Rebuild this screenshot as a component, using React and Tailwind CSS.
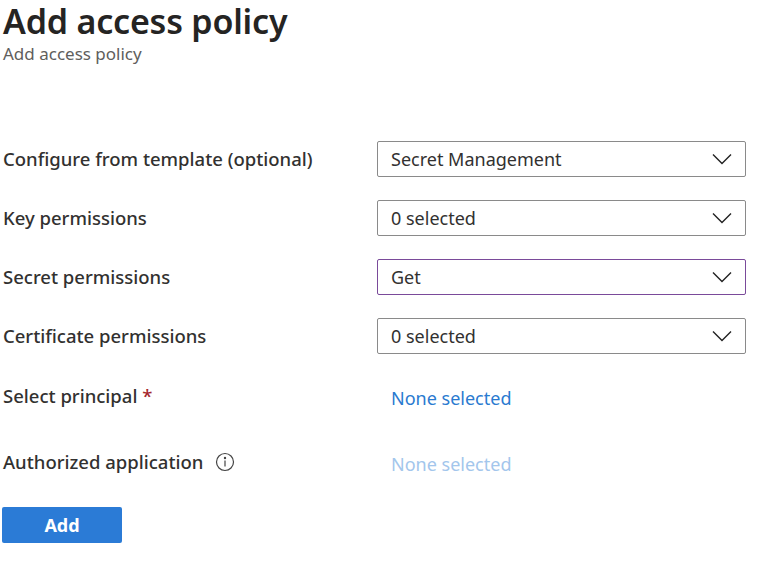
import React from "react";

const Chevron = () => (
  <svg width="20" height="12" viewBox="0 0 20 12" fill="none" stroke="#222" strokeWidth="1.4">
    <path d="M1 1.5 L10 10.5 L19 1.5" />
  </svg>
);

const Dropdown = ({ value, purple }) => (
  <div className={`flex items-center justify-between w-[369px] h-[36px] pl-[13px] pr-[13px] rounded-[2px] border ${purple ? "border-[#7a4a9a]" : "border-[#8a8a8a]"}`}>
    <span className="text-[18px] text-[#323130]">{value}</span>
    <Chevron />
  </div>
);

const Row = ({ label, children }) => (
  <div className="flex items-center h-[36px]">
    <div className="w-[377px] pl-[3px] text-[18.5px] font-medium text-[#323130]">{label}</div>
    {children}
  </div>
);

export default function App() {
  return (
    <div className="w-[768px] h-[564px] bg-white overflow-hidden" style={{ fontFamily: "'Noto Sans', sans-serif" }}>
      <div className="pl-[3px] pt-[1px]">
        <h1 className="text-[34px] leading-[40px] text-[#252423] font-semibold tracking-[-0.2px]">Add access policy</h1>
        <div className="text-[17px] leading-[24px] text-[#605e5c] mt-[1px]">Add access policy</div>
      </div>
      <div className="mt-[75px] flex flex-col gap-[23px]">
        <Row label="Configure from template (optional)"><Dropdown value="Secret Management" /></Row>
        <Row label="Key permissions"><Dropdown value="0 selected" /></Row>
        <Row label="Secret permissions"><Dropdown value="Get" purple /></Row>
        <Row label="Certificate permissions"><Dropdown value="0 selected" /></Row>
      </div>
      <div className="mt-[28px] flex items-start">
        <div className="w-[377px] pl-[3px] text-[18.5px] font-medium text-[#323130]">Select principal <span className="text-[#a4262c]">*</span></div>
        <div className="pl-[14px] pt-[3px] text-[18px] text-[#2a7ad0]">None selected</div>
      </div>
      <div className="mt-[36px] flex items-start">
        <div className="w-[377px] pl-[3px] text-[18.5px] font-medium text-[#323130] flex items-center gap-[12px]">
          Authorized application
          <svg width="20" height="20" viewBox="0 0 20 20" fill="none" stroke="#444" strokeWidth="1.2">
            <circle cx="10" cy="10" r="8.5" />
            <path d="M10 8.5 V14.5" />
            <circle cx="10" cy="6" r="0.6" fill="#444" />
          </svg>
        </div>
        <div className="pl-[14px] pt-[3px] text-[18px] text-[#a3c6ec]">None selected</div>
      </div>
      <div className="mt-[29px] ml-[2px] w-[120px] h-[36px] bg-[#2b7bd6] rounded-[2px] flex items-center justify-center text-white text-[18px] font-bold">Add</div>
    </div>
  );
}
